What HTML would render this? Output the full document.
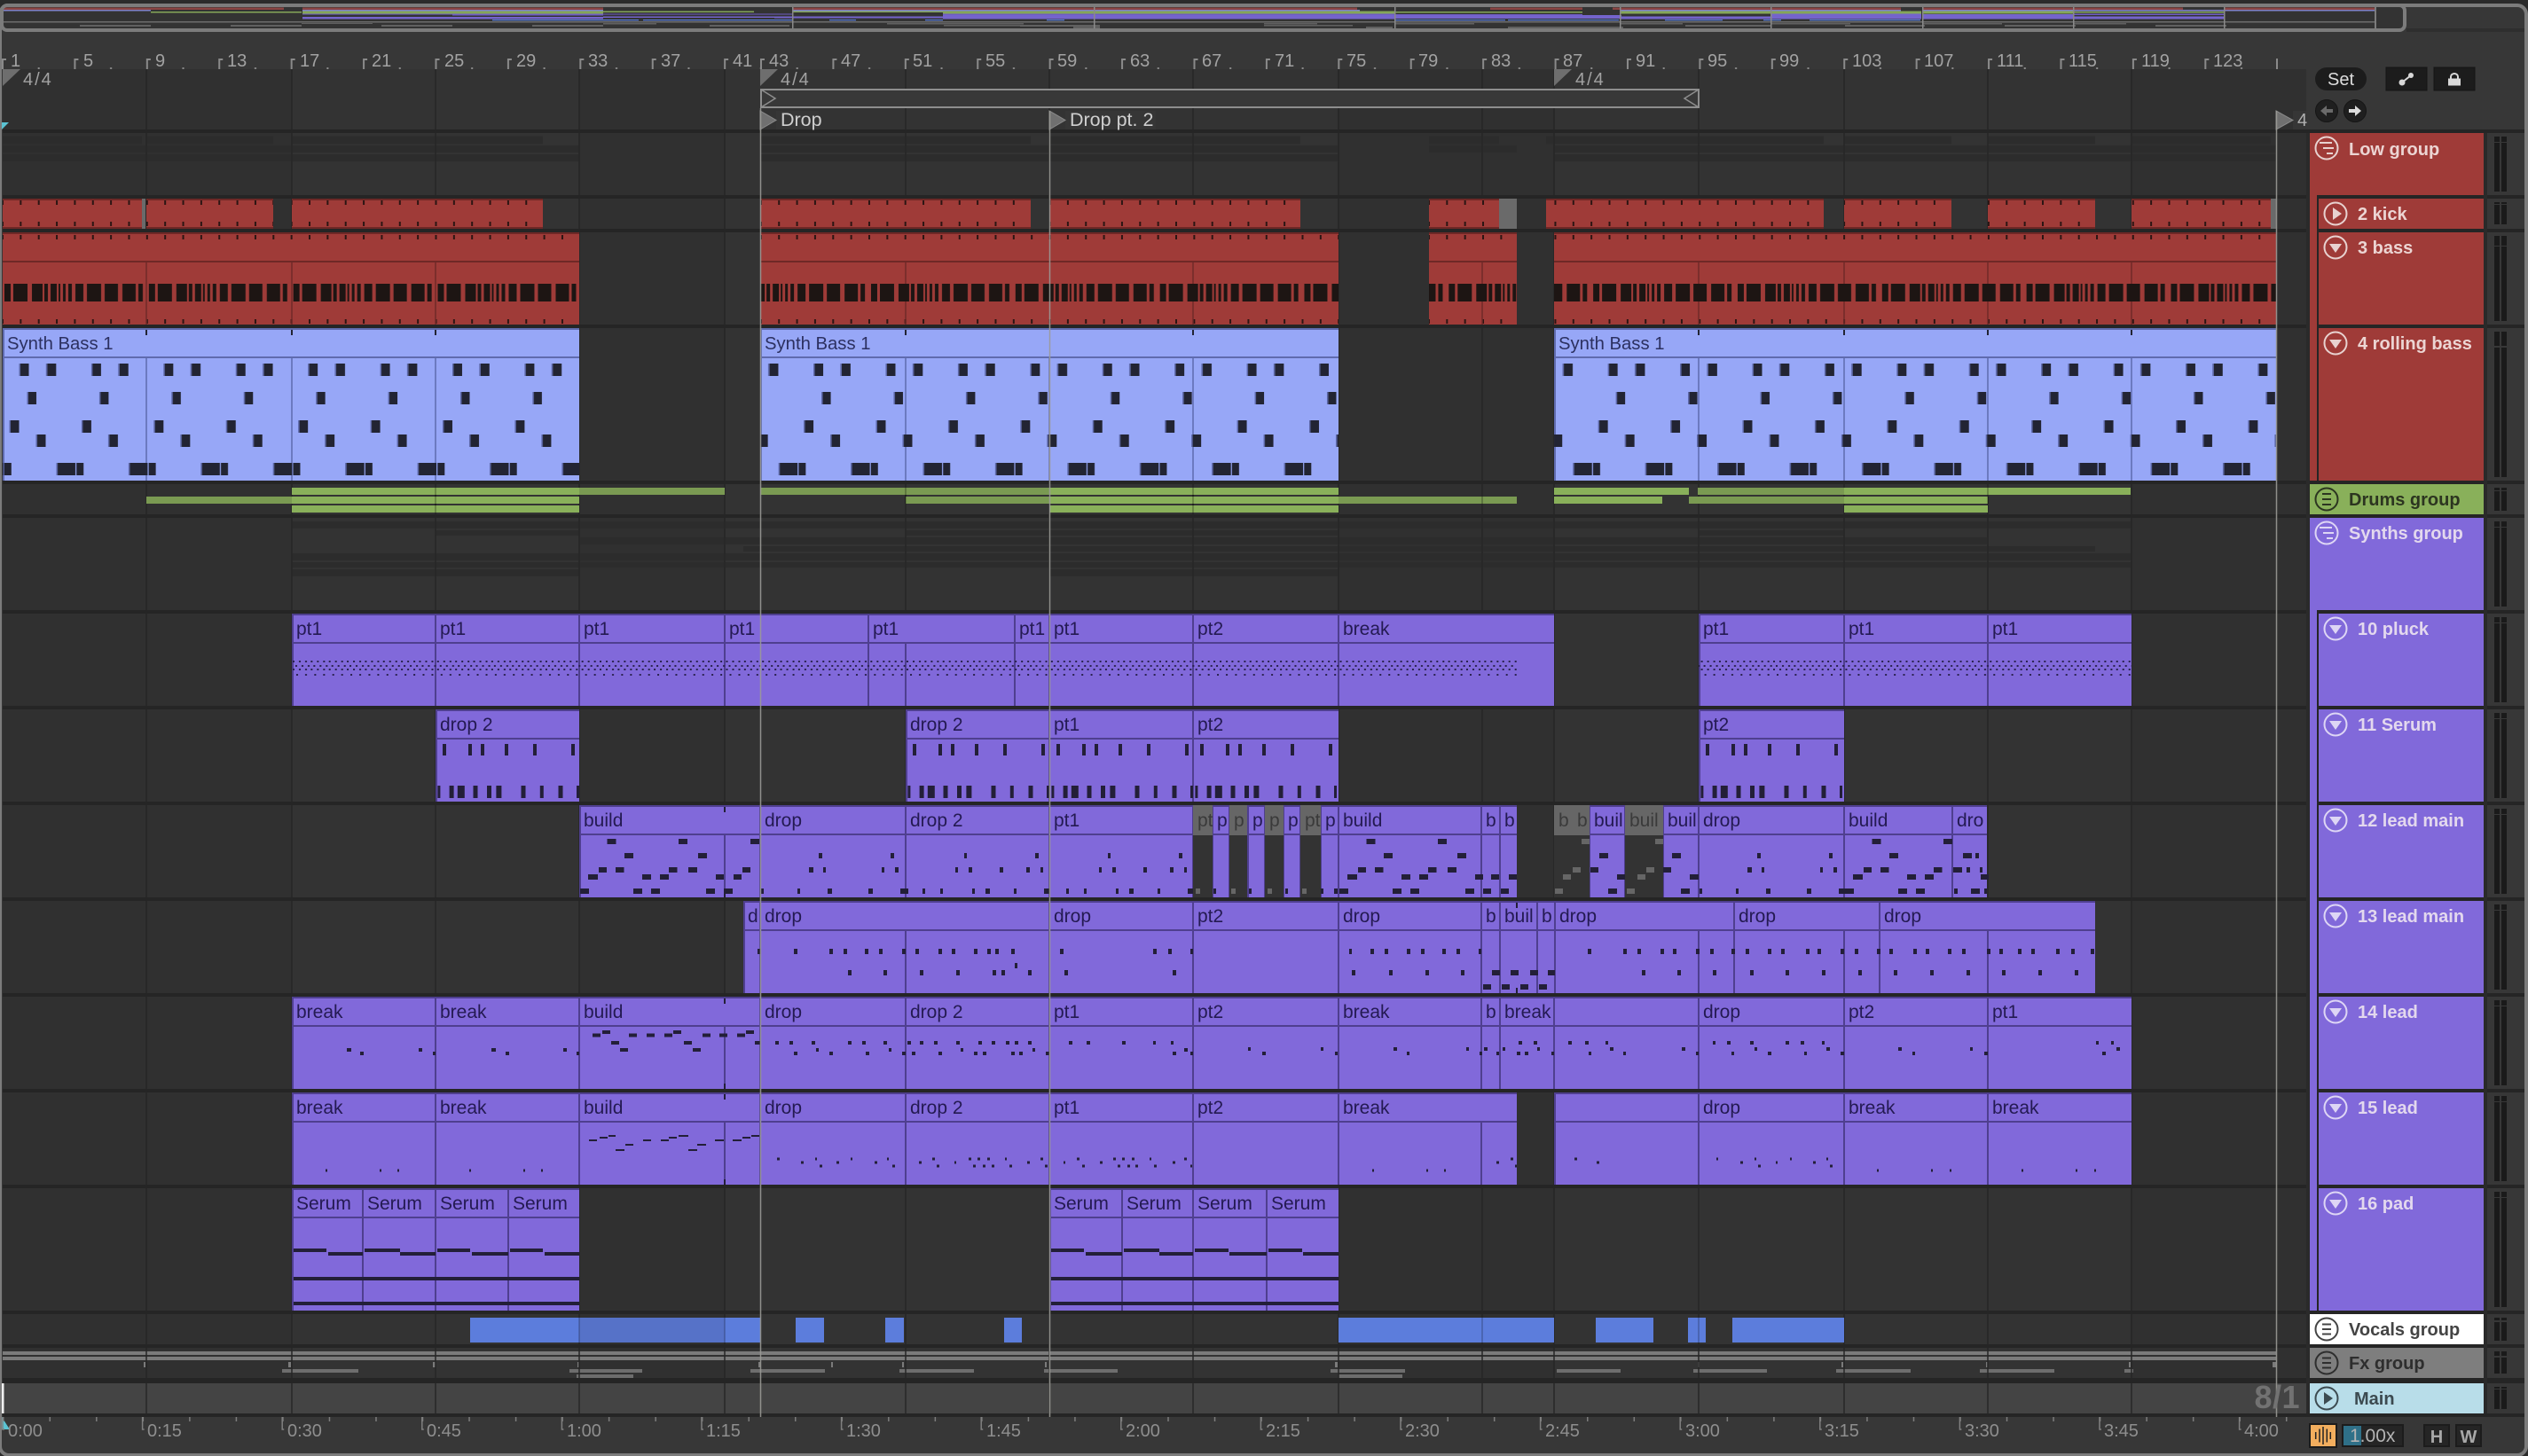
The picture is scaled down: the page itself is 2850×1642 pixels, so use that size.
<!DOCTYPE html>
<html><head><meta charset="utf-8"><title>Arrangement</title>
<style>
html,body{margin:0;padding:0;background:#2b2b2b;width:2850px;height:1642px;overflow:hidden}
svg text{font-family:"Liberation Sans",sans-serif}
.r{font-size:20px;fill:#a2a2a2}
.s{font-size:20px;fill:#a2a2a2;letter-spacing:2px}
.t{font-size:20px;fill:#8e8e8e}
.c{font-size:21px;fill:#241a52}
.m{font-size:21px;fill:#3a3a3a}
.h{font-size:20px;font-weight:bold;fill:#e3d8ee}
.hr{font-size:20px;font-weight:bold;fill:#ecd5d3}
.v{fill:none;stroke:#4f3f8f;stroke-width:2}
.n{fill:none;stroke:#231f38}
</style></head><body>
<svg xmlns="http://www.w3.org/2000/svg" width="2850" height="1642" viewBox="0 0 2850 1642" style="display:block">
<defs>
<pattern id="t" patternUnits="userSpaceOnUse" x="2" y="0" width="20.354" height="20"><rect x="0" y="0" width="2" height="20" fill="#2b1513"/></pattern>
<pattern id="w" patternUnits="userSpaceOnUse" x="2" y="320" width="162.83" height="20"><path fill="#1d1513" d="M3 0h7v20H3zM13 0h16v20H13zM34 0h12v20H34zM48 0h4v20h-4zM55 0h7v20h-7zM64 0h2v20h-2zM69 0h3v20h-3zM75 0h4v20h-4zM83 0h9v20h-9zM96 0h16v20H96zM116 0h15v20h-15zM136 0h15v20h-15zM154 0h5v20h-5z"/></pattern>
<pattern id="rb" patternUnits="userSpaceOnUse" x="2" y="0" width="81.416" height="600"><path fill="#222433" d="M21 410h9.500v14H21zM51.300 410h10v14h-10zM30 442h9v14h-9zM10 474h9.500v14H10zM40 490h9.500v14H40zM63 522h18.416v14H63zM0 522h1.600v14H0zM2.800 522h8v14H2.800z"/><path fill="#5b66a5" d="M19.500 410h1.500v14h-1.500zM49.800 410h1.500v14h-1.500zM28.500 442h1.500v14h-1.500zM8.500 474h1.500v14H8.500zM38.500 490h1.500v14h-1.500zM61.500 522h1.500v14h-1.500z"/></pattern>
<pattern id="d" patternUnits="userSpaceOnUse" x="329" y="744" width="20.354" height="20"><path fill="#2a2250" d="M1 1h2v2H1zM8 1h2v2H8zM15 1h2v2h-2zM4 6h2v2H4zM11 6h2v2h-2zM18 6h2v2h-2zM1 10h2v2H1zM8 10h2v2H8zM15 10h2v2h-2zM5 16h2v2H5zM15 16h2v2h-2z"/></pattern>
<pattern id="rt" patternUnits="userSpaceOnUse" x="2" y="66" width="81.416" height="12"><path fill="#8a8a8a" d="M0 0h2v12H0zM0 0h5v2H0zM40.700 10h2v2h-2z"/></pattern>
<pattern id="rt2" patternUnits="userSpaceOnUse" x="857" y="66" width="81.416" height="12"><path fill="#8a8a8a" d="M0 0h2v12H0zM0 0h5v2H0zM40.700 10h2v2h-2z"/></pattern>
<pattern id="mt" patternUnits="userSpaceOnUse" x="3" y="1598" width="52.53" height="6"><rect x="0" y="0" width="1.500" height="5" fill="#7c7c7c"/></pattern>
<clipPath id="ck"><path d="M3 224h157v34H3zM165 224h143v34H165zM329 224h283v34H329zM857 224h305v34H857zM1183 224h283v34h-283zM1611 224h79v34h-79zM1743 224h313v34h-313zM2079 224h121v34h-121zM2241 224h121v34h-121zM2403 224h157v34h-157z"/></clipPath>
<clipPath id="cb"><path d="M3 262h650v104H3zM857 262h652v104H857zM1611 262h99v104h-99zM1752 262h814v104h-814z"/></clipPath>
<clipPath id="cr"><path d="M3 370h650v172H3zM857 370h652v172H857zM1752 370h814v172h-814z"/></clipPath>
<clipPath id="cp"><path d="M329 744h1381v20H329zM1915 744h488v20h-488z"/></clipPath>
<path id="n11" d="M8 845.500h4M37 845.500h4M51 845.500h4M78 845.500h4M110 845.500h4M153 845.500h4" stroke-width="13"/>
<path id="n11b" d="M2.400 893h3M15.600 893h5M24.800 893h8M42.500 893h5M58 893h5M68.400 893h6M96.500 893h5M117.800 893h4M138.500 893h5M159 893h3" stroke-width="14"/>
<path id="b12" d="M31.500 949h10M112 949h10M51 965h10M134 965h10M22 981h9M41 981h9.500M101 981h9.500M123 981h10M10 989h11M71 989h10M91 989h10M154 989h9M1 1005h10M61 1005h10M81 1005h10M143 1005h10" stroke-width="6"/>
<path id="d12" d="M66 965h4M147 965h4M55 981h5M71 981h3M137 981h3M152 981h4M1 1005h3M42 1005h3M76 1005h5M122 1005h5M158 1005h9" stroke-width="6"/>
<path id="e12" d="M66 965h3M146 965h4M56 981h3M71 981h4M106 981h4M136 981h4M152 981h3M19 1005h3M39 1005h3M75 1005h3M90 1005h5M122 1005h3M156 1005h7" stroke-width="6"/>
</defs>

<!-- window -->
<rect x="0" y="6" width="2848" height="1635" rx="10" fill="#373737" stroke="#7c7c7c" stroke-width="4"/>
<rect x="2713" y="32" width="133" height="4" fill="#2e2e2e"/>

<!-- overview -->
<rect x="2" y="6" width="2709" height="28" rx="6" fill="#333"/>
<g>
<path fill="#8a4442" d="M4 8.500h316v2.500H4zM341 8.500h339v2.500H341zM893 8.500h532v2.500H893zM1425 8.500h105v2.500h-105zM1680 8.500h104v2.500h-104zM1818 8.500h325v2.500h-325zM2168 8.500h293v2.500h-293zM2507 8.500h171v2.500h-171z"/>
<path fill="#7f82c8" d="M4 11h166v1.500H4zM341 11h339v1.500H341zM893 11h640v1.500H893zM1827 11h316v1.500h-316zM2168 11h340v1.500h-340zM2507 11h171v1.500h-171z"/>
<path fill="#84a658" d="M170 13h170v1.500H170zM341 12.500h339v3H341zM680 12.500h170v1.500H680zM893 12.500h170v1.500H893zM1063 12.500h510v3h-510zM1572 13h212v1.500h-212zM1827 12.500h170v3h-170zM1996 12.500h170v3h-170zM2167 12.500h170v3h-170zM2337 13h170v1.500h-170z"/>
<path fill="#6f5cc4" d="M341 15.500h169v1h-169zM510 15.500h170v2H510zM680 15.500h213v1H680zM1063 15.500h510v4h-510zM1572 16h212v3h-212zM1996 16h170v3h-170zM2337 15.500h170v1.500h-170z"/>
<path fill="#7464cc" d="M341 19h339v2.500H341zM680 18.500h193v1.500H680zM873 18.500h190v2H873zM1063 17h510v4.500h-510zM1572 17h256v4h-256zM1827 18.500h170v3h-170zM1996 15.500h170v6h-170zM2167 16h170v5.500h-170zM2337 18.500h170v3h-170z"/>
<path fill="#5b7dd6" d="M555 22h165v1.200H555zM725 22h168v1.200H725zM935 22h30v1.200h-30zM1043 22h20v1.200h-20zM1180 22h20v1.200h-20zM1572 22h125v1.200h-125zM1700 22h125v1.200h-125zM1877 22h65v1.200h-65zM1988 22h20v1.200h-20zM2040 22h125v1.200h-125z"/>
<rect x="4" y="24" width="2674" height="1.500" fill="#6c6c6c"/>
<path fill="#606060" d="M90 28h80v2H90zM260 28h80v2h-80zM430 28h80v2h-80zM600 28h80v2h-80zM340 26h80v1H340zM680 26h60v1.500h-60zM800 28h90v2h-90zM1000 26h70v1.500h-70zM1064 26h90v1.500h-90zM1064 28h90v1.500h-90zM1150 28h90v2h-90zM1210 30h30v2h-30zM1425 26h60v1.500h-60zM1425 28h100v1.500h-100zM1540 30h30v2h-30zM1572 26h90v1.500h-90zM1700 30h130v2h-130zM1827 26h70v1.500h-70zM1900 28h96v2h-96zM1996 26h90v1.500h-90zM2080 28h90v2h-90zM2167 26h90v1.500h-90zM2260 28h80v2h-80zM2337 26h60v1.500h-60zM2430 28h80v2h-80z"/>
<path fill="#8a8a8a" d="M893 8h1.500v24H893zM1233 8h1.500v24h-1.500zM1572 8h1.500v24h-1.500zM1826 8h1.500v24h-1.500zM1996 8h1.500v24h-1.500zM2167 8h1.500v24h-1.500zM2337 8h1.500v24h-1.500zM2507 8h1.500v24h-1.500z"/>
<rect x="2677" y="8" width="2" height="24" fill="#7c7c7c"/>
</g>
<rect x="2" y="6" width="2709" height="28" rx="6" fill="none" stroke="#7c7c7c" stroke-width="4"/>

<!-- bar ruler -->
<rect x="2" y="66" width="855" height="12" fill="url(#rt)"/>
<rect x="857" y="66" width="1711" height="12" fill="url(#rt2)"/>
<g class="r">
<text x="12" y="75" class="r">1</text><text x="94" y="75" class="r">5</text><text x="175" y="75" class="r">9</text><text x="256" y="75" class="r">13</text><text x="338" y="75" class="r">17</text><text x="419" y="75" class="r">21</text><text x="501" y="75" class="r">25</text><text x="582" y="75" class="r">29</text><text x="663" y="75" class="r">33</text><text x="745" y="75" class="r">37</text><text x="826" y="75" class="r">41</text><text x="867" y="75" class="r">43</text><text x="948" y="75" class="r">47</text><text x="1029" y="75" class="r">51</text><text x="1111" y="75" class="r">55</text><text x="1192" y="75" class="r">59</text><text x="1274" y="75" class="r">63</text><text x="1355" y="75" class="r">67</text><text x="1437" y="75" class="r">71</text><text x="1518" y="75" class="r">75</text><text x="1599" y="75" class="r">79</text><text x="1681" y="75" class="r">83</text><text x="1762" y="75" class="r">87</text><text x="1844" y="75" class="r">91</text><text x="1925" y="75" class="r">95</text><text x="2006" y="75" class="r">99</text><text x="2088" y="75" class="r">103</text><text x="2169" y="75" class="r">107</text><text x="2251" y="75" class="r">111</text><text x="2332" y="75" class="r">115</text><text x="2414" y="75" class="r">119</text><text x="2495" y="75" class="r">123</text>
</g>
<rect x="2566" y="66" width="2" height="12" fill="#8a8a8a"/>

<!-- arrangement background -->
<rect x="3" y="78" width="2597" height="1516" fill="#333"/>
<path fill="#303030" d="M3 78h326v1516H3zM653 78h164v1516H653zM1509 78h243v1516h-243zM2403 78h197v1516h-197z"/>
<rect x="3" y="1560" width="2597" height="34" fill="#444"/>

<!-- group mini clips -->
<path fill="#2c2c2c" d="M3 153.500h157v9H3zM165 153.500h143v9H165zM329 153.500h283v9H329zM857 153.500h305v9H857zM1183 153.500h283v9h-283zM1611 153.500h79v9h-79zM1743 153.500h313v9h-313zM2079 153.500h121v9h-121zM2241 153.500h121v9h-121zM2403 153.500h157v9h-157zM3 164h650v8H3zM857 164h652v8H857zM1611 164h99v8h-99zM1752 164h814v8h-814zM3 174h650v8H3zM857 174h652v8H857zM1752 174h814v8h-814z"/>
<path fill="#2c2c2c" d="M329 588h2074v8H329zM491 598h162v6H491zM1021 598h488v6h-488zM1915 598h164v6h-164zM653 606h1587v8H653zM838 616h1524v6H838zM329 624h2074v8H329zM329 634h2074v6H329zM329 642h324v8H329zM1183 642h326v8h-326z"/>

<!-- fx -->
<path fill="#7b7b7b" d="M3 1524h2563v4H3zM3 1530h2563v4H3z"/>
<path fill="#7b7b7b" d="M162 1536h2v6h-2zM325 1536h3v6h-3zM488 1536h3v6h-3zM651 1536h2v6h-2zM855 1536h2v6h-2zM937 1536h2v6h-2zM1017 1536h2v6h-2zM1178 1536h2v6h-2zM1505 1536h3v6h-3zM1914 1536h2v6h-2zM2076 1536h2v6h-2zM2239 1536h2v6h-2zM2400 1536h2v6h-2zM2562 1536h4v6h-4z"/>
<path fill="#6d6d6d" d="M318 1544h86v4h-86zM642 1544h82v4h-82zM846 1544h84v4h-84zM1014 1544h84v4h-84zM1177 1544h83v4h-83zM1500 1544h84v4h-84zM1755 1544h72v4h-72zM1909 1544h83v4h-83zM2070 1544h84v4h-84zM2232 1544h84v4h-84zM2395 1544h10v4h-10zM650 1550h64v4h-64zM1509 1550h72v4h-72z"/>

<!-- grid -->
<path fill="none" stroke="#262626" stroke-width="1.500" d="M165 78V1598M329 78V1598M491 78V1598M653 78V1598M817 78V1598M1021 78V1598M1345 78V1598M1509 78V1598M1671 78V1598M1752 78V1598M1915 78V1598M2079 78V1598M2241 78V1598M2403 78V1598M1183 78V1598"/>

<!-- green drums -->
<path fill="#89b05a" d="M329 550h324v8H329zM1183 550h326v8h-326zM1752 550h152v8h-152zM2079 550h323v8h-323zM329 560h324v8H329zM1183 560h326v8h-326zM1752 560h122v8h-122zM2079 560h162v8h-162zM329 570h324v8H329zM1183 570h326v8h-326zM2079 570h162v8h-162z"/>
<path fill="#7a9a52" d="M653 550h164v8H653zM857 550h326v8H857zM1914 550h165v8h-165zM165 560h164v8H165zM1021 560h162v8h-162zM1509 560h201v8h-201zM1904 560h175v8h-175z"/>
<path fill="none" stroke="#000" stroke-opacity=".3" stroke-width="1.500" d="M491 550v28M1021 550v18M1345 550v28M1671 560v8M1345 560v8M2241 550v8M2241 560v8"/>

<!-- vocals -->
<path fill="#5c7ddc" d="M530 1486h123v28H530zM817 1486h40v28h-40zM897 1486h32v28h-32zM998 1486h21v28h-21zM1132 1486h20v28h-20zM1509 1486h243v28h-243zM1799 1486h65v28h-65zM1903 1486h20v28h-20zM1953 1486h126v28h-126z"/>
<rect x="653" y="1486" width="164" height="28" fill="#5672c8"/>
<path fill="none" stroke="#000" stroke-opacity=".25" stroke-width="1.500" d="M653 1486v28M817 1486v28M1671 1486v28M1915 1486v28"/>

<!-- separators -->
<path fill="#252525" d="M3 146h2843v4H3zM3 220h2843v4H3zM3 258h2843v4H3zM3 366h2843v4H3zM3 542h2843v4H3zM3 580h2843v4H3zM3 688h2843v4H3zM3 796h2843v4H3zM3 904h2843v4H3zM3 1012h2843v4H3zM3 1120h2843v4H3zM3 1228h2843v4H3zM3 1336h2843v4H3zM3 1478h2843v4H3zM3 1516h2843v4H3zM3 1554h2843v6H3zM3 1594h2843v4H3z"/>

<!-- kick -->
<g clip-path="url(#ck)">
<rect x="0" y="224" width="2850" height="34" fill="#9f3b38"/>
<path fill="#6f2826" d="M0 224h2850v2H0zM0 256h2850v2H0z"/>
<rect x="0" y="226" width="2850" height="5" fill="url(#t)"/>
<rect x="0" y="250" width="2850" height="5" fill="url(#t)"/>
</g>
<path fill="#6a6a6a" d="M160 224h4v34h-4zM1690 224h20v34h-20zM2560 224h6v34h-6z"/>

<!-- bass -->
<g clip-path="url(#cb)">
<rect x="0" y="262" width="2850" height="104" fill="#9f3b38"/>
<path fill="#6f2826" d="M0 262h2850v2H0zM0 294h2850v2H0z"/>
<rect x="0" y="265" width="2850" height="5" fill="url(#t)"/>
<rect x="0" y="360" width="2850" height="5" fill="url(#t)"/>
<path fill="none" stroke="#702a28" stroke-width="1.500" d="M165 296v70M329 296v70M491 296v70M1021 296v70M1345 296v70M1671 296v70M1915 296v70M2079 296v70M2241 296v70M2403 296v70"/>
<rect x="0" y="320" width="2850" height="20" fill="url(#w)"/>
</g>

<!-- rolling bass -->
<g clip-path="url(#cr)">
<rect x="0" y="370" width="2850" height="172" fill="#97a7f7"/>
<path fill="#5f6bae" d="M0 370h2850v2H0zM0 402h2850v2H0zM3 370h2v172H3zM857 370h2v172h-2zM1752 370h2v172h-2z"/>
<path fill="none" stroke="#5f6bae" stroke-width="1.500" d="M165 404v138M329 404v138M491 404v138M1021 404v138M1183 404v138M1345 404v138M1915 404v138M2079 404v138M2241 404v138M2403 404v138"/>
<path fill="none" stroke="#222433" stroke-width="2" d="M165 372v6M329 372v6M491 372v6M1021 372v6M1345 372v6M1915 372v6M2079 372v6M2241 372v6M2403 372v6"/>
<rect x="0" y="404" width="2850" height="138" fill="url(#rb)"/>
</g>
<text x="8" y="394" style="font-size:20.300px;fill:#2c3060">Synth Bass 1</text>
<text x="862" y="394" style="font-size:20.300px;fill:#2c3060">Synth Bass 1</text>
<text x="1757" y="394" style="font-size:20.300px;fill:#2c3060">Synth Bass 1</text>

<!-- PURPLE TRACKS -->
<g fill="#8169da">
<path d="M329 692h1423v104H329zM1915 692h488v104h-488z"/>
<path d="M491 800h162v104H491zM1021 800h488v104h-488zM1915 800h164v104h-164z"/>
<path d="M653 908h1057v104H653zM1752 908h488v104h-488z"/>
<path d="M838 1016h1524v104H838z"/>
<path d="M329 1124h2074v104H329z"/>
<path d="M329 1232h1381v104H329zM1752 1232h651v104h-651z"/>
<path d="M329 1340h324v138H329zM1183 1340h326v138h-326z"/>
</g>
<path fill="#4f3f8f" d="M329 692h1423v2H329zM1915 692h488v2h-488zM329 724h1423v2H329zM1915 724h488v2h-488zM491 800h162v2H491zM1021 800h488v2h-488zM1915 800h164v2h-164zM491 832h162v2H491zM1021 832h488v2h-488zM1915 832h164v2h-164zM653 908h1057v2H653zM1752 908h488v2h-488zM653 940h1057v2H653zM1752 940h488v2h-488zM838 1016h1524v2H838zM838 1048h1524v2H838zM329 1124h2074v2H329zM329 1156h2074v2H329zM329 1232h1381v2H329zM1752 1232h651v2h-651zM329 1264h1381v2H329zM1752 1264h651v2h-651zM329 1340h324v2H329zM1183 1340h326v2h-326zM329 1372h324v2H329zM1183 1372h326v2h-326z"/>
<path class="v" d="M330 692v104M491 692v104M653 692v104M817 692v104M979 692v104M1144 692v104M1183 692v104M1345 692v104M1509 692v104M1916 692v104M2079 692v104M2241 692v104M1021 726v70"/>
<path class="v" d="M492 800v104M1022 800v104M1183 800v104M1345 800v104M1916 800v104"/>
<path class="v" d="M654 908v104M857 908v104M1021 908v104M1183 908v104M1345 908v104M1367 908v104M1386 908v104M1407 908v104M1426 908v104M1447 908v104M1466 908v104M1489 908v104M1509 908v104M1670 908v104M1691 908v104M1792 908v104M1832 908v104M1875 908v104M1915 908v104M2079 908v104M2201 908v104M817 942v70"/>
<path class="v" d="M839 1016v104M857 1016v104M1183 1016v104M1345 1016v104M1509 1016v104M1670 1016v104M1691 1016v104M1733 1016v104M1753 1016v104M1955 1016v104M2119 1016v104M1021 1050v70M1915 1050v70M2079 1050v70M2241 1050v70"/>
<path class="v" d="M330 1124v104M491 1124v104M653 1124v104M857 1124v104M1021 1124v104M1183 1124v104M1345 1124v104M1509 1124v104M1670 1124v104M1691 1124v104M1752 1124v104M1915 1124v104M2079 1124v104M2241 1124v104M817 1158v70"/>
<path class="v" d="M330 1232v104M491 1232v104M653 1232v104M857 1232v104M1021 1232v104M1183 1232v104M1345 1232v104M1509 1232v104M1753 1232v104M1915 1232v104M2079 1232v104M2241 1232v104M817 1266v70M1670 1266v70"/>
<path class="v" d="M330 1340v138M409 1340v138M491 1340v138M573 1340v138M1184 1340v138M1265 1340v138M1345 1340v138M1428 1340v138"/>
<path fill="none" stroke="#231f38" stroke-width="2" d="M817 910v6M817 1006v6M817 1126v6M817 1222v6M817 1234v6M817 1330v6M1710 1018v6M1710 1114v6"/>

<!-- notes: pluck -->
<g clip-path="url(#cp)"><rect x="0" y="744" width="2850" height="20" fill="url(#d)"/></g>

<!-- notes: serum 11 -->
<g class="n">
<use href="#n11" x="491"/><use href="#n11b" x="491"/><use href="#n11" x="1021"/><use href="#n11b" x="1021"/><use href="#n11" x="1183"/><use href="#n11b" x="1183"/><use href="#n11" x="1345"/><use href="#n11b" x="1345"/><use href="#n11" x="1915"/><use href="#n11b" x="1915"/>
<!-- 12 -->
<use href="#b12" x="653"/><use href="#d12" x="857"/><use href="#e12" x="1021"/><use href="#e12" x="1183"/><use href="#b12" x="1509"/><use href="#d12" x="1915"/><use href="#b12" x="2079"/>
<path stroke-width="6" d="M846 949h10M837 981h9M827 989h9M816 1005h10M1368 1005h3M1408 1005h3M1449 1005h3M1489 1005h3M1504 1005h4M1672 1005h9M1681 989h9M1692 1005h9M1701 989h9M1803 965h10M1793 981h9M1823 989h10M1813 1005h10M1885 965h10M1875 981h9M1905 989h10M1895 1005h10M2203 1005h4M2237 1005h3M2227 965h4M2217 981h4M2232 981h3"/>
<!-- 13 -->
<path stroke-width="6" d="M854 1073h4M895 1073h4M935 1073h4M951 1073h4M975 1073h4M991 1073h4M1017 1073h4M1032 1073h4M1058 1073h4M1073 1073h4M1098 1073h4M1113 1073h4M1122 1073h4M1140 1073h4M1195 1073h4M1300 1073h4M1317 1073h4M1342 1073h3M956 1097h4M996 1097h4M1037 1097h4M1078 1097h4M1119 1097h4M1129 1097h4M1159 1097h4M1200 1097h4M1322 1097h4M1144 1089h3M1521 1073h3M1545 1073h4M1561 1073h4M1586 1073h4M1602 1073h4M1626 1073h4M1642 1073h4M1667 1073h3M1524 1097h4M1566 1097h4M1607 1097h4M1647 1097h4M1682 1097h9M1703 1097h9M1725 1097h9M1745 1097h8M1672 1113h9M1693 1113h9M1714 1113h9M1735 1113h9M1790 1073h4M1830 1073h4M1846 1073h4M1872 1073h4M1886 1073h4M1912 1073h4M1928 1073h4M1952 1073h4M1968 1073h4M1993 1073h4M2008 1073h4M2036 1073h4M2049 1073h4M2075 1073h4M2091 1073h4M2116 1073h4M2130 1073h4M2157 1073h4M2171 1073h4M2196 1073h4M2212 1073h4M2240 1073h4M2254 1073h4M2275 1073h4M2290 1073h4M2318 1073h4M2335 1073h4M2357 1073h4M1851 1097h4M1891 1097h4M1931 1097h4M1973 1097h4M2013 1097h4M2054 1097h4M2095 1097h4M2135 1097h4M2176 1097h4M2217 1097h4M2257 1097h4M2298 1097h4M2339 1097h4"/>
<!-- 14 -->
<path stroke-width="4" d="M391 1184h5M406 1188h4M472 1184h4M488 1188h3M554 1184h5M570 1188h4M635 1184h4M650 1188h3M679 1164h9M759 1164h9M841 1164h9M668 1167.500h9M749 1167.500h9M831 1167.500h9M709 1167.500h9M729 1167.500h9M792 1167.500h9M811 1167.500h9M689 1176h9M771 1176h9M851 1176h6M699 1184h9M781 1184h9M874 1176h4M890 1176h4M915 1176h4M956 1176h4M972 1176h4M996 1176h4M1023 1176h4M1037 1176h4M1053 1176h4M1078 1176h4M1103 1176h4M1118 1176h4M1134 1176h4M1144 1176h4M1159 1176h4M920 1184h3M1002 1184h3M1083 1184h3M1164 1184h3M895 1188h4M935 1188h4M976 1188h4M1017 1188h4M1028 1188h4M1058 1188h4M1098 1188h4M1108 1188h4M1140 1188h4M1149 1188h4M1179 1188h4M1205 1176h4M1225 1176h4M1265 1176h4M1300 1176h3M1320 1176h3M1322 1188h4M1335 1184h4M1342 1188h3M1407 1183h3M1423 1188h4M1489 1183h3M1505 1188h3M1571 1183h4M1586 1188h3M1653 1183h3M1668 1188h3M1673 1183h4M1687 1188h3M1694 1183h3M1712 1176h4M1729 1176h4M1710 1188h4M1719 1188h4M1733 1183h3M1749 1188h3M1768 1176h4M1787 1176h4M1810 1176h3M1791 1188h3M1815 1183h4M1830 1188h3M1896 1183h4M1912 1188h3M1931 1176h3M1947 1176h4M1973 1176h4M2013 1176h4M2030 1176h4M2054 1176h3M1952 1188h3M1993 1188h4M2034 1188h3M2075 1188h4M1978 1183h3M2059 1183h4M2140 1183h4M2156 1188h3M2221 1183h3M2237 1188h4M2363 1176h3M2380 1176h3M2386 1183h4M2370 1188h4"/>
<!-- 15 -->
<path stroke-width="2" d="M686 1281h8M676 1283h9M664 1286h9M725 1286h9M745 1286h9M705 1291h9M694 1297h10M754 1283h9M765 1281h11M786 1291h10M776 1297h10M806 1286h10M826 1286h10M837 1283h9M847 1281h9"/>
<path stroke-width="3" d="M367 1320h2M428 1320h2M448 1320h2M529 1320h2M590 1320h2M610 1320h2M876 1307h3M903 1311h3M919 1307h2M924 1315h3M943 1311h3M959 1307h2M986 1311h3M1000 1307h2M1006 1315h3M1036 1311h3M1051 1307h3M1056 1315h3M1076 1311h2M1092 1307h3M1097 1315h3M1102 1307h3M1108 1315h3M1113 1307h3M1118 1315h3M1133 1307h2M1138 1315h3M1158 1311h3M1173 1307h3M1178 1315h3M1199 1311h2M1214 1307h3M1220 1315h3M1240 1311h3M1255 1307h3M1260 1315h3M1265 1307h3M1271 1315h3M1276 1307h3M1280 1315h3M1296 1307h2M1301 1315h3M1322 1311h3M1335 1307h3M1342 1315h2M1547 1320h2M1608 1320h2M1628 1320h2M1687 1311h3M1703 1307h3M1708 1315h2M1775 1307h3M1800 1311h3M1935 1307h2M1962 1311h3M1978 1307h2M1982 1315h3M2002 1311h2M2018 1307h2M2044 1311h3M2059 1307h2M2063 1315h3M2116 1320h2M2177 1320h2M2198 1320h2M2279 1320h2M2340 1320h2M2361 1320h2"/>
<!-- 16 -->
<path stroke-width="4" d="M331 1410h37M370 1414h39M411 1410h40M451 1414h40M493 1410h37M532 1414h41M575 1410h37M614 1414h39M1185 1410h37M1224 1414h41M1267 1410h40M1307 1414h38M1347 1410h38M1386 1414h42M1430 1410h38M1469 1414h40M331 1442h322M331 1470h322M1185 1442h324M1185 1470h324"/>
</g>

<!-- muted clips -->
<path fill="#333" d="M1345 940h22v72h-22zM1386 940h20v72h-20zM1426 940h21v72h-21zM1466 940h23v72h-23zM1752 940h40v72h-40zM1832 940h43v72h-43z"/>
<path fill="#666" d="M1345 908h22v34h-22zM1386 908h20v34h-20zM1426 908h21v34h-21zM1466 908h23v34h-23zM1752 908h40v34h-40zM1832 908h43v34h-43z"/>
<path fill="none" stroke="#666" stroke-width="6" d="M1348 1005h5M1388 1005h5M1429 1005h5M1468 1005h5M1783 949h9M1773 981h9M1762 989h9M1753 1005h9M1866 949h9M1856 981h9M1846 989h9M1834 1005h9"/>

<!-- labels 10 -->
<text class="c" x="334" y="716">pt1</text><text class="c" x="496" y="716">pt1</text><text class="c" x="658" y="716">pt1</text><text class="c" x="822" y="716">pt1</text><text class="c" x="984" y="716">pt1</text><text class="c" x="1149" y="716">pt1</text><text class="c" x="1188" y="716">pt1</text><text class="c" x="1350" y="716">pt2</text><text class="c" x="1514" y="716">break</text><text class="c" x="1920" y="716">pt1</text><text class="c" x="2084" y="716">pt1</text><text class="c" x="2246" y="716">pt1</text>
<!-- 11 -->
<text class="c" x="496" y="824">drop 2</text><text class="c" x="1026" y="824">drop 2</text><text class="c" x="1188" y="824">pt1</text><text class="c" x="1350" y="824">pt2</text><text class="c" x="1920" y="824">pt2</text>
<!-- 12 -->
<text class="c" x="658" y="932">build</text><text class="c" x="862" y="932">drop</text><text class="c" x="1026" y="932">drop 2</text><text class="c" x="1188" y="932">pt1</text>
<svg x="1345" y="908" width="22" height="34"><text class="m" x="5" y="24">pt</text></svg>
<svg x="1367" y="908" width="19" height="34"><text class="c" x="5" y="24">p</text></svg>
<svg x="1386" y="908" width="20" height="34"><text class="m" x="5" y="24">p</text></svg>
<svg x="1407" y="908" width="19" height="34"><text class="c" x="5" y="24">p</text></svg>
<svg x="1426" y="908" width="21" height="34"><text class="m" x="5" y="24">p</text></svg>
<svg x="1447" y="908" width="19" height="34"><text class="c" x="5" y="24">p</text></svg>
<svg x="1466" y="908" width="23" height="34"><text class="m" x="5" y="24">pt</text></svg>
<svg x="1489" y="908" width="20" height="34"><text class="c" x="5" y="24">p</text></svg>
<text class="c" x="1514" y="932">build</text>
<text class="c" x="1675" y="932">b</text>
<text class="c" x="1696" y="932">b</text>
<text class="m" x="1757" y="932">b</text>
<text class="m" x="1778" y="932">b</text>
<text class="c" x="1797" y="932">buil</text>
<text class="m" x="1837" y="932">buil</text>
<text class="c" x="1880" y="932">buil</text>
<text class="c" x="1920" y="932">drop</text><text class="c" x="2084" y="932">build</text>
<text class="c" x="2206" y="932">dro</text>
<!-- 13 -->
<text class="c" x="843" y="1040">d</text>
<text class="c" x="862" y="1040">drop</text><text class="c" x="1188" y="1040">drop</text><text class="c" x="1350" y="1040">pt2</text><text class="c" x="1514" y="1040">drop</text>
<text class="c" x="1675" y="1040">b</text>
<text class="c" x="1696" y="1040">buil</text>
<text class="c" x="1738" y="1040">b</text>
<text class="c" x="1758" y="1040">drop</text><text class="c" x="1960" y="1040">drop</text><text class="c" x="2124" y="1040">drop</text>
<!-- 14 -->
<text class="c" x="334" y="1148">break</text><text class="c" x="496" y="1148">break</text><text class="c" x="658" y="1148">build</text><text class="c" x="862" y="1148">drop</text><text class="c" x="1026" y="1148">drop 2</text><text class="c" x="1188" y="1148">pt1</text><text class="c" x="1350" y="1148">pt2</text><text class="c" x="1514" y="1148">break</text>
<text class="c" x="1675" y="1148">b</text>
<text class="c" x="1696" y="1148">break</text>
<text class="c" x="1920" y="1148">drop</text><text class="c" x="2084" y="1148">pt2</text><text class="c" x="2246" y="1148">pt1</text>
<!-- 15 -->
<text class="c" x="334" y="1256">break</text><text class="c" x="496" y="1256">break</text><text class="c" x="658" y="1256">build</text><text class="c" x="862" y="1256">drop</text><text class="c" x="1026" y="1256">drop 2</text><text class="c" x="1188" y="1256">pt1</text><text class="c" x="1350" y="1256">pt2</text><text class="c" x="1514" y="1256">break</text><text class="c" x="1920" y="1256">drop</text><text class="c" x="2084" y="1256">break</text><text class="c" x="2246" y="1256">break</text>
<!-- 16 -->
<text class="c" x="334" y="1364">Serum</text><text class="c" x="414" y="1364">Serum</text><text class="c" x="496" y="1364">Serum</text><text class="c" x="578" y="1364">Serum</text><text class="c" x="1188" y="1364">Serum</text><text class="c" x="1270" y="1364">Serum</text><text class="c" x="1350" y="1364">Serum</text><text class="c" x="1433" y="1364">Serum</text>

<!-- loop brace -->
<rect x="858" y="101" width="1057" height="20" fill="#383838" stroke="#8e8e8e" stroke-width="2"/>
<path fill="none" stroke="#8e8e8e" stroke-width="1.500" d="M858 101l16 10-16 10M1915 101l-16 10 16 10"/>

<!-- time signatures -->
<path fill="#6e6e6e" d="M3 78h20L3 97zM857 78h20l-20 19zM1752 78h20l-20 19z"/>
<text class="s" x="26" y="96">4/4</text><text class="s" x="880" y="96">4/4</text><text class="s" x="1776" y="96">4/4</text>

<!-- locators -->
<path fill="#363636" d="M875 125h48v21h-48zM1201 125h102v21h-102zM2585 125h15v21h-15z"/>
<path fill="#707070" stroke="#8a8a8a" d="M857 125l18 10.500-18 10.500zM1183 125l18 10.500-18 10.500zM2566 125l19 10.500-19 10.500z"/>
<text x="880" y="142" style="font-size:21.500px;fill:#cfcfcf">Drop</text>
<text x="1206" y="142" style="font-size:21.500px;fill:#cfcfcf">Drop pt. 2</text>
<text x="2590" y="142" style="font-size:20px;fill:#b0b0b0">4</text>

<!-- marker lines -->
<path fill="none" stroke="#9a9a96" stroke-width="1.500" opacity=".9" d="M857.500 122V1598M1183.500 125V1598M2566.500 125V1598"/>

<!-- insert markers -->
<path fill="#5bc3d3" d="M2 138h8l-8 8zM2 1598l9 14H2z"/>
<rect x="2" y="1560" width="2.500" height="34" fill="#f0f0f0"/>

<!-- 8/1 -->
<text x="2593" y="1588" text-anchor="end" style="font-size:36px;font-weight:bold;fill:#727272;letter-spacing:.5px">8/1</text>

<!-- time ruler -->
<rect x="3" y="1598" width="2580" height="6" fill="url(#mt)"/>
<path fill="none" stroke="#808080" stroke-width="1.500" d="M3 1598v14h2M160.600 1598v14h2M318.200 1598v14h2M475.800 1598v14h2M633.400 1598v14h2M791 1598v14h2M948.600 1598v14h2M1106.200 1598v14h2M1263.800 1598v14h2M1421.400 1598v14h2M1579 1598v14h2M1736.600 1598v14h2M1894.200 1598v14h2M2051.800 1598v14h2M2209.400 1598v14h2M2367 1598v14h2M2524.600 1598v14h2"/>
<text class="t" x="9" y="1620">0:00</text><text class="t" x="166" y="1620">0:15</text><text class="t" x="324" y="1620">0:30</text><text class="t" x="481" y="1620">0:45</text><text class="t" x="639" y="1620">1:00</text><text class="t" x="796" y="1620">1:15</text><text class="t" x="954" y="1620">1:30</text><text class="t" x="1112" y="1620">1:45</text><text class="t" x="1269" y="1620">2:00</text><text class="t" x="1427" y="1620">2:15</text><text class="t" x="1584" y="1620">2:30</text><text class="t" x="1742" y="1620">2:45</text><text class="t" x="1900" y="1620">3:00</text><text class="t" x="2057" y="1620">3:15</text><text class="t" x="2215" y="1620">3:30</text><text class="t" x="2372" y="1620">3:45</text><text class="t" x="2530" y="1620">4:00</text>

<!-- right panel: separators -->
<path fill="#2a2a2a" d="M2600 150h4v1444h-4zM2800 150h4v1444h-4z"/>
<path fill="#373737" d="M2804 150h42v70h-42zM2804 224h42v34h-42zM2804 262h42v104h-42zM2804 370h42v172h-42zM2804 546h42v34h-42zM2804 584h42v104h-42zM2804 692h42v104h-42zM2804 800h42v104h-42zM2804 908h42v104h-42zM2804 1016h42v104h-42zM2804 1124h42v104h-42zM2804 1232h42v104h-42zM2804 1340h42v138h-42zM2804 1482h42v34h-42zM2804 1520h42v34h-42zM2804 1560h42v34h-42z"/>
<!-- meters -->
<path fill="#1a1a1a" d="M2812 154h6v6h-6zM2820 154h6v6h-6zM2812 161h6v55h-6zM2820 161h6v55h-6zM2812 228h6v2h-6zM2820 228h6v2h-6zM2812 231h6v22h-6zM2820 231h6v22h-6zM2812 266h6v11h-6zM2820 266h6v11h-6zM2812 278h6v84h-6zM2820 278h6v84h-6zM2812 374h6v16h-6zM2820 374h6v16h-6zM2812 392h6v146h-6zM2820 392h6v146h-6zM2812 550h6v3h-6zM2820 550h6v3h-6zM2812 554h6v22h-6zM2820 554h6v22h-6zM2812 588h6v6h-6zM2820 588h6v6h-6zM2812 595h6v89h-6zM2820 595h6v89h-6zM2812 696h6v6h-6zM2820 696h6v6h-6zM2812 703h6v89h-6zM2820 703h6v89h-6zM2812 804h6v6h-6zM2820 804h6v6h-6zM2812 811h6v89h-6zM2820 811h6v89h-6zM2812 912h6v6h-6zM2820 912h6v6h-6zM2812 919h6v89h-6zM2820 919h6v89h-6zM2812 1020h6v6h-6zM2820 1020h6v6h-6zM2812 1027h6v89h-6zM2820 1027h6v89h-6zM2812 1128h6v6h-6zM2820 1128h6v6h-6zM2812 1135h6v89h-6zM2820 1135h6v89h-6zM2812 1236h6v6h-6zM2820 1236h6v6h-6zM2812 1243h6v89h-6zM2820 1243h6v89h-6zM2812 1344h6v6h-6zM2820 1344h6v6h-6zM2812 1351h6v123h-6zM2820 1351h6v123h-6zM2812 1486h6v3h-6zM2820 1486h6v3h-6zM2812 1491h6v21h-6zM2820 1491h6v21h-6zM2812 1524h6v5h-6zM2820 1524h6v5h-6zM2812 1531h6v18h-6zM2820 1531h6v18h-6zM2812 1564h6v2h-6zM2820 1564h6v2h-6zM2812 1567h6v22h-6zM2820 1567h6v22h-6z"/>

<!-- headers -->
<path fill="#9f3b38" d="M2604 150h196v70h-196zM2604 220h8v322h-8zM2614 224h186v34h-186zM2614 262h186v104h-186zM2614 370h186v172h-186z"/>
<path fill="#252525" d="M2612 220h2v322h-2z"/>
<rect x="2604" y="546" width="196" height="34" fill="#89b05a"/>
<path fill="#8169da" d="M2604 584h196v104h-196zM2604 688h8v790h-8zM2614 692h186v104h-186zM2614 800h186v104h-186zM2614 908h186v104h-186zM2614 1016h186v104h-186zM2614 1124h186v104h-186zM2614 1232h186v104h-186zM2614 1340h186v138h-186z"/>
<path fill="#252525" d="M2612 688h2v790h-2z"/>
<rect x="2604" y="1482" width="196" height="34" fill="#fff"/>
<rect x="2604" y="1520" width="196" height="34" fill="#7e7e7e"/>
<rect x="2604" y="1560" width="196" height="34" fill="#b8dde9"/>

<!-- header icons -->
<g fill="none" stroke="#e8d2d0" stroke-width="2">
<circle cx="2623" cy="167" r="12.500"/><path d="M2615 161h14M2619 167h12M2623 173h7"/>
<circle cx="2633" cy="241" r="12.500"/><circle cx="2633" cy="279" r="12.500"/><circle cx="2633" cy="387" r="12.500"/>
</g>
<path fill="#e8d2d0" d="M2630 234l10 7-10 7zM2626 275h14l-7 10zM2626 383h14l-7 10z"/>
<g fill="none" stroke="#2c3520" stroke-width="2"><circle cx="2623" cy="563" r="12.500"/><path d="M2618 557h10M2618 563h10M2618 569h10"/></g>
<g fill="none" stroke="#ded6f5" stroke-width="2">
<circle cx="2623" cy="601" r="12.500"/><path d="M2615 595h14M2619 601h12M2623 607h7"/>
<circle cx="2633" cy="709" r="12.500"/><circle cx="2633" cy="817" r="12.500"/><circle cx="2633" cy="925" r="12.500"/><circle cx="2633" cy="1033" r="12.500"/><circle cx="2633" cy="1141" r="12.500"/><circle cx="2633" cy="1249" r="12.500"/><circle cx="2633" cy="1357" r="12.500"/>
</g>
<path fill="#ded6f5" d="M2626 705h14l-7 10zM2626 813h14l-7 10zM2626 921h14l-7 10zM2626 1029h14l-7 10zM2626 1137h14l-7 10zM2626 1245h14l-7 10zM2626 1353h14l-7 10z"/>
<g fill="none" stroke="#444" stroke-width="2"><circle cx="2623" cy="1499" r="12.500"/><path d="M2618 1493.500h10M2618 1499h10M2618 1504.500h10"/></g>
<g fill="none" stroke="#2e2e2e" stroke-width="2"><circle cx="2623" cy="1537" r="12.500"/><path d="M2618 1531.500h10M2618 1537h10M2618 1542.500h10"/></g>
<g fill="none" stroke="#3c4a50" stroke-width="2"><circle cx="2623" cy="1577" r="12.500"/></g>
<path fill="#3c4a50" d="M2620 1570l10 7-10 7z"/>

<text class="hr" x="2648" y="175">Low group</text>
<text class="hr" x="2658" y="248">2 kick</text>
<text class="hr" x="2658" y="286">3 bass</text>
<text class="hr" x="2658" y="394">4 rolling bass</text>
<text x="2648" y="570" style="font-size:20px;font-weight:bold;fill:#2c3520">Drums group</text>
<text class="h" x="2648" y="608">Synths group</text>
<text class="h" x="2658" y="716">10 pluck</text>
<text class="h" x="2658" y="824">11 Serum</text>
<text class="h" x="2658" y="932">12 lead main</text>
<text class="h" x="2658" y="1040">13 lead main</text>
<text class="h" x="2658" y="1148">14 lead</text>
<text class="h" x="2658" y="1256">15 lead</text>
<text class="h" x="2658" y="1364">16 pad</text>
<text x="2648" y="1506" style="font-size:20px;font-weight:bold;fill:#444">Vocals group</text>
<text x="2648" y="1544" style="font-size:20px;font-weight:bold;fill:#2e2e2e">Fx group</text>
<text x="2654" y="1584" style="font-size:20px;font-weight:bold;fill:#3c4a50">Main</text>

<!-- top right controls -->
<rect x="2610" y="76" width="58" height="26" rx="13" fill="#1c1c1c"/>
<text x="2639" y="96" text-anchor="middle" style="font-size:20px;fill:#dcdcdc">Set</text>
<rect x="2690" y="76" width="46" height="26" fill="#1c1c1c" stroke="#141414"/>
<rect x="2744" y="76" width="46" height="26" fill="#1c1c1c" stroke="#141414"/>
<path stroke="#d8d8d8" stroke-width="2" d="M2708 93l10-8"/>
<circle cx="2708" cy="93" r="3.500" fill="#d8d8d8"/><circle cx="2718" cy="85" r="3" fill="#d8d8d8"/>
<path fill="none" stroke="#d8d8d8" stroke-width="2" d="M2763 88.500v-2a4 3.500 0 0 1 8 0v2"/>
<rect x="2760" y="88.500" width="14" height="8" fill="#d8d8d8"/>
<circle cx="2623" cy="125" r="12.500" fill="#1f1f1f" stroke="#161616"/>
<circle cx="2655" cy="125" r="12.500" fill="#1f1f1f" stroke="#161616"/>
<path fill="#6a6a6a" d="M2616 125l7-6v4h7v4h-7v4z"/>
<path fill="#dcdcdc" d="M2662 125l-7-6v4h-7v4h7v4z"/>

<!-- bottom right -->
<rect x="2604" y="1606" width="30" height="26" fill="#f2ae5e" stroke="#1c1c1c" stroke-width="2"/>
<path stroke="#222" stroke-width="1.500" d="M2610.700 1615v8M2615 1611.500v15M2619 1609v20M2623.300 1611.500v15M2627.300 1615v8"/>
<rect x="2641" y="1607" width="68" height="24" fill="#252525" stroke="#1c1c1c" stroke-width="2"/>
<rect x="2642" y="1608" width="20" height="22" fill="#2f7088"/>
<text x="2649" y="1626" style="font-size:21px;fill:#b4b4b4">1.00x</text>
<rect x="2733" y="1607" width="28" height="24" fill="#252525" stroke="#1c1c1c" stroke-width="2"/>
<rect x="2769" y="1607" width="28" height="24" fill="#252525" stroke="#1c1c1c" stroke-width="2"/>
<text x="2747" y="1627" text-anchor="middle" style="font-size:20px;font-weight:bold;fill:#a8a8a8">H</text>
<text x="2783" y="1627" text-anchor="middle" style="font-size:20px;font-weight:bold;fill:#a8a8a8">W</text>
</svg>
</body></html>
